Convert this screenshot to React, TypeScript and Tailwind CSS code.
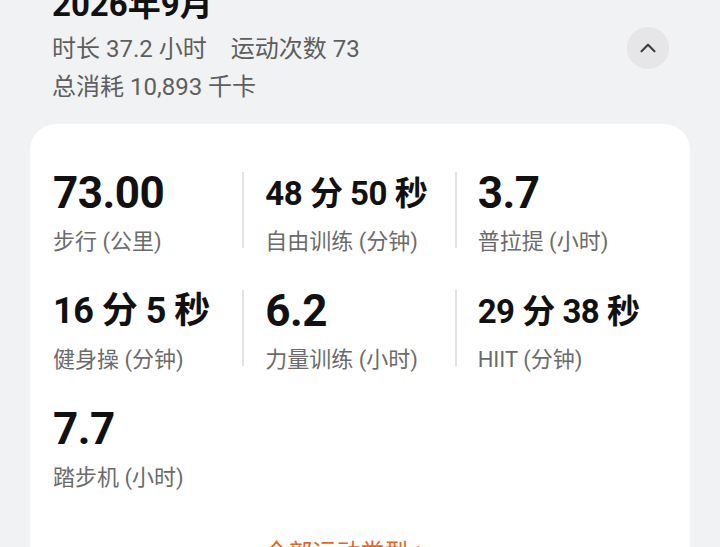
import { ChevronUp, ChevronRight } from 'lucide-react';

type Stat = {
  value: string;
  label: string;
  size: string;
};

const stats: Stat[] = [
  { value: '73.00', label: '步行 (公里)', size: 'text-[44px]' },
  { value: '48 分 50 秒', label: '自由训练 (分钟)', size: 'text-[33px]' },
  { value: '3.7', label: '普拉提 (小时)', size: 'text-[44px]' },
  { value: '16 分 5 秒', label: '健身操 (分钟)', size: 'text-[36px]' },
  { value: '6.2', label: '力量训练 (小时)', size: 'text-[44px]' },
  { value: '29 分 38 秒', label: 'HIIT (分钟)', size: 'text-[33px]' },
  { value: '7.7', label: '踏步机 (小时)', size: 'text-[44px]' },
];

const font = { fontFamily: 'Roboto, "Noto Sans CJK SC", sans-serif' };

function StatCell({ stat, index }: { stat: Stat; index: number }) {
  const hasDivider = index % 3 !== 0;
  return (
    <div className="pl-[23px]">
      <div className={`h-[76px] ${hasDivider ? 'border-l-2 border-[#e3e3e3] -ml-[23px] pl-[21px]' : ''}`}>
        <div className={`${stat.size} h-[42px] flex items-center font-bold text-[#111] leading-none tracking-[-0.5px]`}>
          {stat.value}
        </div>
        <div className="mt-[17px] text-[22px] leading-[22px] text-[#6b6b6b] whitespace-nowrap">{stat.label}</div>
      </div>
    </div>
  );
}

export default function App() {
  return (
    <div className="w-[720px] h-[547px] overflow-hidden bg-[#f1f2f4]" style={font}>
      <div className="px-[52px] -mt-[13px] flex items-start justify-between pr-[51px]">
        <div>
          <div className="text-[33px] leading-[36px] font-bold text-[#111]">2026年9月</div>
          <div className="mt-[7px] text-[24px] leading-[38px] text-[#5e5e5e] flex gap-[24px]">
            <span>时长 37.2 小时</span>
            <span>运动次数 73</span>
          </div>
          <div className="text-[24px] leading-[38px] text-[#5e5e5e]">总消耗 10,893 千卡</div>
        </div>
        <div className="mt-[40px] w-[42px] h-[42px] rounded-full bg-[#e6e6e8] flex items-center justify-center">
          <ChevronUp className="w-[26px] h-[26px] text-[#3f3f3f]" strokeWidth={2} />
        </div>
      </div>
      <div className="mx-[30px] mt-[18px] bg-white rounded-t-[26px] pt-[48px] pr-[23px] pb-[20px]">
        <div className="grid grid-cols-3 gap-y-[42px]">
          {stats.map((s, i) => (
            <StatCell key={s.label} stat={s} index={i} />
          ))}
        </div>
        <div className="mt-[54px] flex items-center justify-center text-[24px] leading-[30px] text-[#e8641e]">
          <span>全部运动类型</span>
          <ChevronRight className="w-[24px] h-[24px]" strokeWidth={2} />
        </div>
      </div>
    </div>
  );
}
